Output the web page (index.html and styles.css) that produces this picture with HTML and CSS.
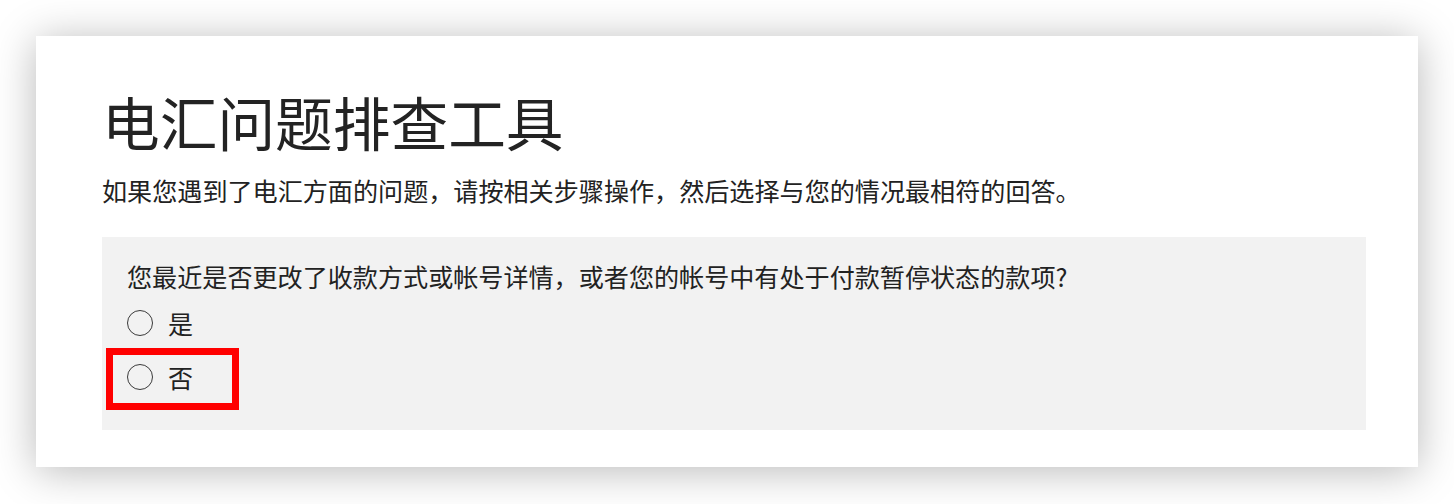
FILE: index.html
```html
<!DOCTYPE html>
<html lang="zh-CN">
<head>
<meta charset="utf-8">
<title>电汇问题排查工具</title>
<link rel="stylesheet" href="styles.css">
</head>
<body>
<div class="page">
  <main class="card">
    <h1 class="title">电汇问题排查工具</h1>
    <p class="intro">如果您遇到了电汇方面的问题，请按相关步骤操作，然后选择与您的情况最相符的回答。</p>
    <section class="panel">
      <p class="question">您最近是否更改了收款方式或帐号详情，或者您的帐号中有处于付款暂停状态的款项?</p>
      <label class="option"><span class="radio"></span><span class="label">是</span></label>
      <label class="option highlighted"><span class="radio"></span><span class="label">否</span><span class="mark"></span></label>
    </section>
  </main>
</div>
</body>
</html>
```

FILE: styles.css
```css
* { box-sizing: border-box; }
html, body { margin: 0; padding: 0; background: #ffffff; }
body {
  font-family: "Noto Sans CJK SC", "Noto Sans", sans-serif;
  color: #222222;
  width: 1454px;
  height: 504px;
  overflow: hidden;
}
.page {
  padding: 36px 36px 0 36px;
}
.card {
  background: #ffffff;
  height: 431px;
  padding: 50px 52px 0 66px;
  box-shadow: 0 4px 40px rgba(0, 0, 0, 0.28);
}
.title {
  margin: 0;
  font-size: 57.7px;
  line-height: 70px;
  font-weight: 400;
  color: #232323;
  letter-spacing: 0;
}
.intro {
  margin: 16px 0 0 0;
  font-size: 25.1px;
  line-height: 36px;
  color: #222222;
}
.panel {
  margin-top: 29px;
  background: #f2f2f2;
  padding: 21px 24px 26px 25px;
}
.question {
  margin: 0 0 2px 0;
  font-size: 25.1px;
  line-height: 36px;
  color: #222222;
}
.option {
  position: relative;
  display: flex;
  align-items: center;
  height: 54px;
  gap: 15px;
  font-size: 25px;
}
.radio {
  width: 26px;
  height: 26px;
  border: 1.2px solid #3a3a3a;
  border-radius: 50%;
  flex: none;
}
.label {
  line-height: 36px;
}
.mark {
  position: absolute;
  left: -21px;
  top: -2px;
  width: 133px;
  height: 62px;
  border: 7px solid #ff0000;
}
```
